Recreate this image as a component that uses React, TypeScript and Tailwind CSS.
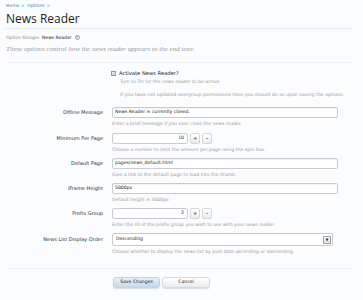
import { ReactNode } from 'react';

const Row = ({ label, help, className = '', children }: { label: string; help: string; className?: string; children: ReactNode }) => (
    <div className={`grid grid-cols-[112px_1fr] ${className}`}>
        <div className="flex h-[11px] items-center justify-end pr-[9px] text-[5px] text-[#333]">{label}</div>
        <div>
            {children}
            <p className="mt-[2px] text-[4.6px] leading-[7px] text-[#9a9a9a]">{help}</p>
        </div>
    </div>
);

const TextInput = ({ value }: { value: string }) => (
    <div className="flex h-[11px] w-[226px] items-center rounded-[2px] border border-[#c8ccd2] bg-white px-[2px] text-[4.6px] text-[#222] shadow-[inset_0_1px_1px_rgba(0,0,0,0.06)]">
        {value}
    </div>
);

const SpinButton = ({ sign }: { sign: string }) => (
    <div className="flex h-[11px] w-[10px] items-center justify-center rounded-[2px] border border-[#d4d8dd] bg-gradient-to-b from-[#ffffff] to-[#e9ecef] text-[5px] font-bold text-[#555]">
        {sign}
    </div>
);

const Spin = ({ value }: { value: string }) => (
    <div className="flex items-center gap-[2px]">
        <div className="flex h-[11px] w-[76px] items-center justify-end rounded-[2px] border border-[#c8ccd2] bg-white px-[3px] text-[4.6px] text-[#222]">
            {value}
        </div>
        <SpinButton sign="+" />
        <SpinButton sign="-" />
    </div>
);

const App = () => {
    return (
        <div className="h-[300px] w-[363px] overflow-hidden bg-[#fbfcfd] font-['DejaVu_Sans',sans-serif]">
            <div className="pt-[3px] pl-[6px] pr-[10px]">
                <div className="h-[6px] text-[4.5px] leading-[6px] text-[#4a78a6]">
                    Home &gt; &nbsp;Options &gt;
                </div>
                <h1 className="mt-[3px] h-[14px] font-['Open_Sans',sans-serif] text-[12px] leading-[14px] text-[#222]">
                    News Reader
                </h1>
                <div className="mt-[2px] -ml-px h-px w-[347px] bg-[#e3e8ee]" />
                <div className="mt-[5px] flex h-[7px] items-center gap-[2px] text-[4.5px] leading-[7px]">
                    <span className="text-[#8a8a8a]">Option Groups:</span>
                    <span className="text-[#222]">News Reader</span>
                    <span className="ml-[1px] flex h-[5px] w-[5px] items-center justify-center rounded-full border border-[#999] text-[3px] leading-none text-[#555]">
                        ▾
                    </span>
                </div>
                <p className="mt-[4px] h-[8px] font-['Liberation_Serif',serif] text-[7px] italic leading-[8px] text-[#9a9a9a]">
                    These options control how the news reader appears to the end user.
                </p>
                <div className="mt-[9px] ml-px h-px w-[346px] bg-[#eef1f4]" />
            </div>

            <div className="pl-[111px]">
                <div className="mt-[7px] flex h-[7px] items-center gap-[3px]">
                    <span className="flex h-[5px] w-[5px] items-center justify-center border border-[#8899aa] bg-[#f4f7fa] text-[4px] leading-none text-[#2a5a8a]">
                        ✓
                    </span>
                    <span className="text-[5.2px] text-[#222]">Activate News Reader?</span>
                </div>
                <p className="mt-[2px] pl-[9px] text-[4.6px] leading-[6px] text-[#9a9a9a]">
                    Turn to On for the news reader to be active.
                </p>
                <p className="mt-[7px] pl-[9px] text-[4.7px] leading-[6px] text-[#9a9a9a]">
                    If you have not updated usergroup permissions then you should do so upon saving the options.
                </p>
            </div>

            <div className="mt-[9px] flex flex-col gap-[5px]">
                <Row label="Offline Message" help="Enter a brief message if you ever close the news reader.">
                    <TextInput value="News Reader is currently closed." />
                </Row>
                <Row className="mt-[1px]" label="Minimum Per Page" help="Choose a number to limit the amount per page using the spin box.">
                    <Spin value="10" />
                </Row>
                <Row label="Default Page" help="Give a link to the default page to load into the iframe.">
                    <TextInput value="pages/news_default.html" />
                </Row>
                <Row label="iFrame Height" help="Default height is 5000px">
                    <TextInput value="5000px" />
                </Row>
                <Row label="Prefix Group" help="Enter the ID of the prefix group you wish to use with your news reader.">
                    <Spin value="2" />
                </Row>
                <div className="grid grid-cols-[112px_1fr]">
                    <div className="flex h-[13px] items-center justify-end pr-[9px] text-[5px] text-[#333]">
                        News List Display Order
                    </div>
                    <div>
                        <div className="flex h-[13px] w-[221px] items-center justify-between rounded-[2px] border border-[#c8ccd2] bg-white pl-[3px] pr-[1px] text-[4.6px] text-[#222]">
                            <span>Descending</span>
                            <span className="flex h-[8px] w-[8px] items-center justify-center border border-[#9aa3ad] bg-gradient-to-b from-white to-[#dde2e7] text-[4px] leading-none text-[#333]">
                                ▼
                            </span>
                        </div>
                        <p className="mt-[2px] text-[4.6px] leading-[7px] text-[#9a9a9a]">
                            Choose whether to display the news list by post date ascending or descending.
                        </p>
                    </div>
                </div>
            </div>

            <div className="mt-[13px] ml-[7px] h-px w-[346px] bg-[#eef1f4]" />

            <div className="mt-[8px] flex gap-[2px] pl-[113px]">
                <button className="flex h-[11px] w-[47px] items-center justify-center rounded-[3px] border border-[#c3d3e2] bg-gradient-to-b from-[#e8f0f8] to-[#c5d8ea] text-[4.6px] text-[#222] shadow-[0_1px_1px_rgba(0,0,0,0.12)]">
                    Save Changes
                </button>
                <button className="flex h-[11px] w-[48px] items-center justify-center rounded-[3px] border border-[#d6d9dd] bg-gradient-to-b from-[#ffffff] to-[#e8eaed] text-[4.6px] text-[#222] shadow-[0_1px_1px_rgba(0,0,0,0.12)]">
                    Cancel
                </button>
            </div>
        </div>
    );
};

export default App;
